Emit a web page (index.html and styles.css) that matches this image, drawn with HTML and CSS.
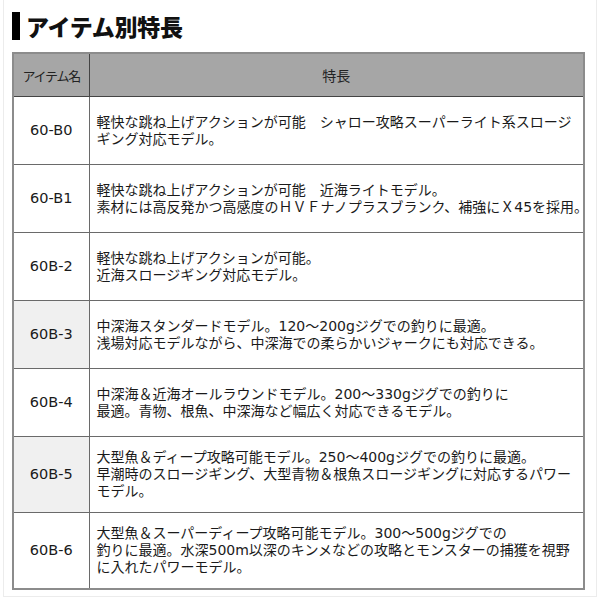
FILE: index.html
```html
<!DOCTYPE html>
<html lang="ja">
<head>
<meta charset="utf-8">
<link rel="stylesheet" href="styles.css">
</head>
<body>
<div class="frame">
  <h1 class="title"><span class="bar"></span><span class="title-text">アイテム別特長</span></h1>
  <table class="spec">
    <colgroup><col class="c1"><col class="c2"></colgroup>
    <thead>
      <tr><th>アイテム名</th><th>特長</th></tr>
    </thead>
    <tbody>
      <tr><td class="name">60-B0</td><td class="desc">軽快な跳ね上げアクションが可能　シャロー攻略スーパーライト系スロージ<br>ギング対応モデル。</td></tr>
      <tr><td class="name">60-B1</td><td class="desc">軽快な跳ね上げアクションが可能　近海ライトモデル。<br>素材には高反発かつ高感度のＨＶＦナノプラスブランク、補強にＸ45を採用。</td></tr>
      <tr><td class="name">60B-2</td><td class="desc">軽快な跳ね上げアクションが可能。<br>近海スロージギング対応モデル。</td></tr>
      <tr><td class="name shade">60B-3</td><td class="desc">中深海スタンダードモデル。120～200gジグでの釣りに最適。<br>浅場対応モデルながら、中深海での柔らかいジャークにも対応できる。</td></tr>
      <tr><td class="name">60B-4</td><td class="desc">中深海＆近海オールラウンドモデル。200～330gジグでの釣りに<br>最適。青物、根魚、中深海など幅広く対応できるモデル。</td></tr>
      <tr><td class="name shade">60B-5</td><td class="desc">大型魚＆ディープ攻略可能モデル。250～400gジグでの釣りに最適。<br>早潮時のスロージギング、大型青物＆根魚スロージギングに対応するパワー<br>モデル。</td></tr>
      <tr><td class="name">60B-6</td><td class="desc">大型魚＆スーパーディープ攻略可能モデル。300～500gジグでの<br>釣りに最適。水深500m以深のキンメなどの攻略とモンスターの捕獲を視野<br>に入れたパワーモデル。</td></tr>
    </tbody>
  </table>
</div>
</body>
</html>
```
FILE: styles.css
```css
html, body {
  margin: 0;
  padding: 0;
  background: #ffffff;
}
body {
  font-family: "DejaVu Sans", "Noto Sans CJK JP", sans-serif;
  color: #1a1a1a;
}
.frame {
  margin: 0 3px;
  height: 597px;
  border-left: 1px solid #ececec;
  border-right: 1px solid #ececec;
  border-bottom: 1px solid #ececec;
  box-sizing: border-box;
  padding: 12px 0 0 8px;
}
.title {
  display: flex;
  align-items: center;
  gap: 6px;
  margin: 0;
  height: 28px;
}
.bar {
  width: 8px;
  height: 28px;
  background: #000;
}
.title-text {
  font-family: "Noto Sans CJK JP", sans-serif;
  font-weight: 900;
  font-size: 23px;
  line-height: 28px;
  color: #111;
  letter-spacing: -0.3px;
}
.spec {
  margin-top: 12px;
  border-collapse: collapse;
  width: 573px;
  table-layout: fixed;
  font-size: 14px;
  line-height: 17px;
  border: 2px solid #8c8c8c;
}
.c1 { width: 76px; }
.spec th {
  background: #a6a6a6;
  font-weight: normal;
  height: 42px;
  padding: 0;
  text-align: center;
  font-family: "Noto Sans CJK JP", sans-serif;
  border: 1px solid #444;
  color: #222;
}
.spec th:first-child {
  font-size: 13px;
  letter-spacing: -1.2px;
}
.spec td {
  border: 1px solid #6a6a6a;
  vertical-align: middle;
  height: 43px;
  padding: 12px 0 12px 0;
}
.name {
  text-align: center;
  font-size: 14.5px;
  color: #1a1a1a;
}
.name.shade {
  background: #f0f0f0;
}
.desc {
  padding-left: 7px !important;
  white-space: nowrap;
  color: #1a1a1a;
}
```
